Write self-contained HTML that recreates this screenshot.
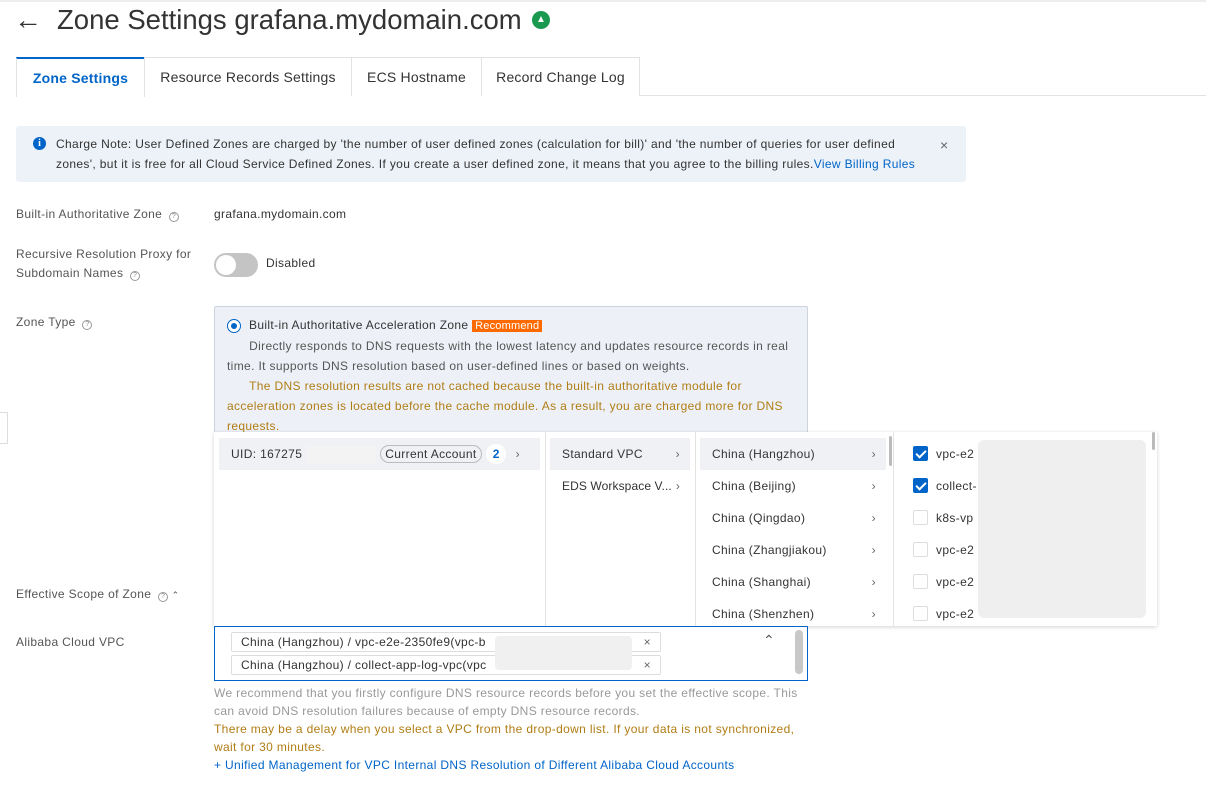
<!DOCTYPE html>
<html><head><meta charset="utf-8"><style>
*{margin:0;padding:0;box-sizing:border-box}
body{width:1206px;height:803px;overflow:hidden;background:#fff;font-family:"Liberation Sans",Arial,sans-serif;color:#333;font-size:12px;position:relative;letter-spacing:0.35px}
.a{position:absolute;white-space:nowrap}
.lbl{color:#555;font-size:12px}
.q{display:inline-block;width:10px;height:10px;border:1px solid #999;border-radius:50%;font-size:7px;line-height:8px;text-align:center;color:#888;vertical-align:0;margin-left:3px;letter-spacing:0}
.tab{position:absolute;top:57px;height:39px;border:1px solid #e3e3e3;border-bottom:none;font-size:14px;line-height:38px;text-align:center;color:#333;background:#fff;letter-spacing:0.2px}
.row{position:absolute;height:32px;line-height:32px;font-size:12px;color:#333}
.chev{position:absolute;right:10px;color:#666}
.cb{position:absolute;left:18px;width:15px;height:15px;border:1px solid #ddd;border-radius:2px;background:#fff}
.cb.on{background:#0064c8;border-color:#0064c8}
.cb.on:after{content:"";position:absolute;left:4px;top:1px;width:4px;height:8px;border:solid #fff;border-width:0 2px 2px 0;transform:rotate(45deg)}
.tag{position:absolute;height:20px;border:1px solid #ddd;border-radius:2px;background:#fff;line-height:18px;padding-left:9px;font-size:12px;color:#333;width:430px}
</style></head><body>
<div class="a" style="left:0;top:0;width:1206px;height:2px;background:#eee"></div>
<div class="a" style="left:14px;top:4px;font-size:28px;color:#333">&#8592;</div>
<div class="a" style="left:57px;top:4px;font-size:27.5px;color:#333;letter-spacing:0">Zone Settings grafana.mydomain.com</div>
<div class="a" style="left:532px;top:11px;width:18px;height:18px;border-radius:50%;background:#1a9a50;color:#fff;font-size:10px;text-align:center;line-height:18px;font-weight:bold;letter-spacing:0">&#9650;</div>

<div class="a" style="left:16px;top:95px;width:1190px;height:1px;background:#e3e3e3"></div>
<div class="tab" style="left:16px;width:129px;border-top:2px solid #0064c8;color:#0064c8;font-weight:bold;height:40px">Zone Settings</div>
<div class="tab" style="left:144px;width:208px">Resource Records Settings</div>
<div class="tab" style="left:351px;width:131px">ECS Hostname</div>
<div class="tab" style="left:481px;width:159px">Record Change Log</div>

<div class="a" style="left:16px;top:126px;width:950px;height:56px;background:#edf2f8;border-radius:3px"></div>
<div class="a" style="left:33px;top:137px;width:13px;height:13px;border-radius:50%;background:#0064c8;color:#fff;font-size:10px;line-height:13px;text-align:center;font-weight:bold;font-family:'Liberation Serif',serif;letter-spacing:0">i</div>
<div class="a" style="left:56px;top:134px;font-size:12px;line-height:20px;color:#333">Charge Note: User Defined Zones are charged by 'the number of user defined zones (calculation for bill)' and 'the number of queries for user defined<br>zones', but it is free for all Cloud Service Defined Zones. If you create a user defined zone, it means that you agree to the billing rules.<span style="color:#0064c8">View Billing Rules</span></div>
<div class="a" style="left:940px;top:137px;color:#666;font-size:14px">&#215;</div>

<div class="a lbl" style="left:16px;top:207px">Built-in Authoritative Zone <span class="q">?</span></div>
<div class="a" style="left:214px;top:207px">grafana.mydomain.com</div>

<div class="a lbl" style="left:16px;top:245px;line-height:19px">Recursive Resolution Proxy for<br>Subdomain Names <span class="q">?</span></div>
<div class="a" style="left:214px;top:253px;width:44px;height:24px;border-radius:12px;background:#c4c4c4"></div>
<div class="a" style="left:216px;top:255px;width:20px;height:20px;border-radius:50%;background:#fff"></div>
<div class="a" style="left:266px;top:256px">Disabled</div>

<div class="a lbl" style="left:16px;top:315px">Zone Type <span class="q">?</span></div>
<div class="a" style="left:214px;top:306px;width:594px;height:140px;background:#edf1f7;border:1px solid #ccd3dd;border-radius:2px"></div>
<div class="a" style="left:227px;top:319px;width:14px;height:14px;border-radius:50%;border:1px solid #0064c8;background:#fff"></div>
<div class="a" style="left:231px;top:323px;width:6px;height:6px;border-radius:50%;background:#0064c8"></div>
<div class="a" style="left:249px;top:318px">Built-in Authoritative Acceleration Zone <span style="background:#ff6a00;color:#fff;padding:0 3px;font-size:11px;letter-spacing:0.2px">Recommend</span></div>
<div class="a" style="left:227px;top:336px;line-height:20px;color:#555">&nbsp;&nbsp;&nbsp;&nbsp;&nbsp;&nbsp;Directly responds to DNS requests with the lowest latency and updates resource records in real<br>time. It supports DNS resolution based on user-defined lines or based on weights.</div>
<div class="a" style="left:227px;top:376px;line-height:20px;color:#b07d14">&nbsp;&nbsp;&nbsp;&nbsp;&nbsp;&nbsp;The DNS resolution results are not cached because the built-in authoritative module for<br>acceleration zones is located before the cache module. As a result, you are charged more for DNS<br>requests.</div>

<!-- dropdown -->
<div class="a" style="left:214px;top:432px;width:943px;height:194px;background:#fff;box-shadow:0 1px 4px rgba(0,0,0,.18)"></div>
<div class="a" style="left:545px;top:432px;width:1px;height:194px;background:#e3e3e3"></div>
<div class="a" style="left:695px;top:432px;width:1px;height:194px;background:#e3e3e3"></div>
<div class="a" style="left:893px;top:432px;width:1px;height:194px;background:#e3e3e3"></div>
<div class="row" style="left:219px;top:438px;width:321px;background:#eff1f5;padding-left:12px">UID: 167275<span style="display:inline-block;width:70px;height:18px;background:#f3f3f3;vertical-align:middle;margin-left:4px"></span><span style="border:1px solid #bbb;border-radius:10px;padding:0 4px;margin-left:4px;line-height:16px;display:inline-block">Current Account</span> <span style="display:inline-block;width:20px;height:20px;border-radius:50%;background:#fff;color:#0064c8;text-align:center;line-height:20px;font-weight:bold;margin-left:1px">2</span><span class="chev" style="right:20px">&#8250;</span></div>
<div class="row" style="left:550px;top:438px;width:140px;background:#eff1f5;padding-left:12px">Standard VPC<span class="chev">&#8250;</span></div>
<div class="row" style="left:550px;top:470px;width:140px;padding-left:12px;letter-spacing:0.1px">EDS Workspace V...<span class="chev">&#8250;</span></div>
<div class="row" style="left:700px;top:438px;width:186px;background:#eff1f5;padding-left:12px">China (Hangzhou)<span class="chev">&#8250;</span></div>
<div class="row" style="left:700px;top:470px;width:186px;padding-left:12px">China (Beijing)<span class="chev">&#8250;</span></div>
<div class="row" style="left:700px;top:502px;width:186px;padding-left:12px">China (Qingdao)<span class="chev">&#8250;</span></div>
<div class="row" style="left:700px;top:534px;width:186px;padding-left:12px">China (Zhangjiakou)<span class="chev">&#8250;</span></div>
<div class="row" style="left:700px;top:566px;width:186px;padding-left:12px">China (Shanghai)<span class="chev">&#8250;</span></div>
<div class="row" style="left:700px;top:598px;width:186px;padding-left:12px">China (Shenzhen)<span class="chev">&#8250;</span></div>
<div class="a" style="left:889px;top:436px;width:3px;height:30px;background:#bbb;border-radius:2px"></div>
<div class="a" style="left:1152px;top:432px;width:3px;height:18px;background:#bbb;border-radius:2px"></div>
<div class="row" style="left:895px;top:438px;width:80px"><span class="cb on" style="top:8px"></span><span style="margin-left:41px">vpc-e2</span></div>
<div class="row" style="left:895px;top:470px;width:80px"><span class="cb on" style="top:8px"></span><span style="margin-left:41px">collect-</span></div>
<div class="row" style="left:895px;top:502px;width:80px"><span class="cb" style="top:8px"></span><span style="margin-left:41px">k8s-vp</span></div>
<div class="row" style="left:895px;top:534px;width:80px"><span class="cb" style="top:8px"></span><span style="margin-left:41px">vpc-e2</span></div>
<div class="row" style="left:895px;top:566px;width:80px"><span class="cb" style="top:8px"></span><span style="margin-left:41px">vpc-e2</span></div>
<div class="row" style="left:895px;top:598px;width:80px"><span class="cb" style="top:8px"></span><span style="margin-left:41px">vpc-e2</span></div>
<div class="a" style="left:978px;top:440px;width:168px;height:178px;background:#efefef;border-radius:6px"></div>

<div class="a lbl" style="left:16px;top:587px">Effective Scope of Zone <span class="q">?</span> <span style="font-size:9px">&#8963;</span></div>
<div class="a lbl" style="left:16px;top:635px">Alibaba Cloud VPC</div>

<div class="a" style="left:214px;top:626px;width:594px;height:55px;border:1px solid #0064c8;background:#fff"></div>
<div class="tag" style="left:231px;top:632px">China (Hangzhou) / vpc-e2e-2350fe9(vpc-b<span style="position:absolute;right:9px;color:#666">&#215;</span></div>
<div class="tag" style="left:231px;top:655px">China (Hangzhou) / collect-app-log-vpc(vpc<span style="position:absolute;right:9px;color:#666">&#215;</span></div>
<div class="a" style="left:495px;top:636px;width:137px;height:34px;background:#f0f0f0;border-radius:4px"></div>
<div class="a" style="left:763px;top:632px;color:#555;font-size:14px">&#8963;</div>
<div class="a" style="left:795px;top:630px;width:8px;height:44px;background:#c8c8c8;border-radius:4px"></div>

<div class="a" style="left:214px;top:684px;line-height:18px;color:#999">We recommend that you firstly configure DNS resource records before you set the effective scope. This<br>can avoid DNS resolution failures because of empty DNS resource records.</div>
<div class="a" style="left:214px;top:720px;line-height:18px;color:#b07d14">There may be a delay when you select a VPC from the drop-down list. If your data is not synchronized,<br>wait for 30 minutes.</div>
<div class="a" style="left:214px;top:758px;color:#0064c8">+ Unified Management for VPC Internal DNS Resolution of Different Alibaba Cloud Accounts</div>
<div class="a" style="left:0;top:412px;width:8px;height:32px;border:1px solid #ddd;border-left:none;background:#fff"></div>
</body></html>
